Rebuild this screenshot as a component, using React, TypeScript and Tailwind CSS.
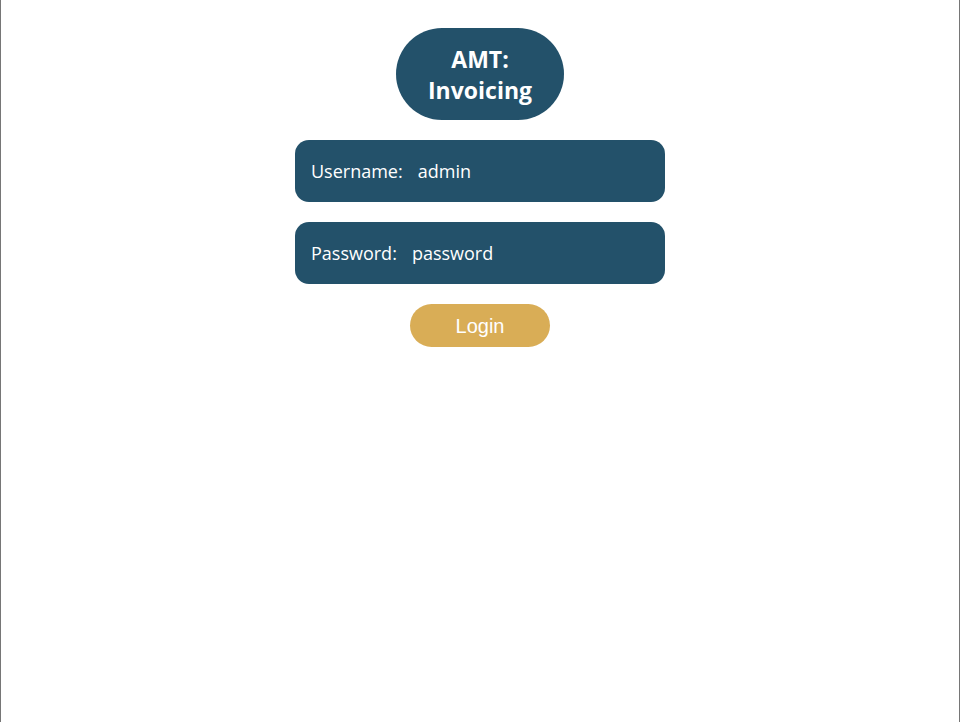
import { useState } from "react";

const App = () => {
  const [username, setUsername] = useState("admin");
  const [password, setPassword] = useState("password");

  return (
    <div className="h-[722px] w-full border-x border-[#767676] bg-white font-['Open_Sans',sans-serif]">
      <div className="flex flex-col items-center pt-7">
        <div className="flex h-[92px] w-[168px] items-center justify-center rounded-full bg-[#23516a]">
          <h1 className="pt-[2px] text-center text-[23px] font-bold leading-[31px] text-white">
            AMT:
            <br />
            Invoicing
          </h1>
        </div>

        <form
          className="mt-5 flex flex-col items-center gap-5"
          onSubmit={(e) => e.preventDefault()}
        >
          <label className="flex h-[62px] w-[370px] items-center rounded-[14px] bg-[#23516a] px-4 text-[18px] text-white">
            <span>Username:</span>
            <input
              className="ml-[15px] w-[220px] bg-transparent text-white outline-none"
              value={username}
              onChange={(e) => setUsername(e.target.value)}
            />
          </label>
          <label className="flex h-[62px] w-[370px] items-center rounded-[14px] bg-[#23516a] px-4 text-[18px] text-white">
            <span>Password:</span>
            <input
              className="ml-[15px] w-[220px] bg-transparent text-white outline-none"
              value={password}
              onChange={(e) => setPassword(e.target.value)}
            />
          </label>
          <button
            type="submit"
            className="h-[43px] w-[140px] rounded-full bg-[#d9ad56] font-['Liberation_Sans',sans-serif] text-[20px] text-white"
          >
            Login
          </button>
        </form>
      </div>
    </div>
  );
};

export default App;
